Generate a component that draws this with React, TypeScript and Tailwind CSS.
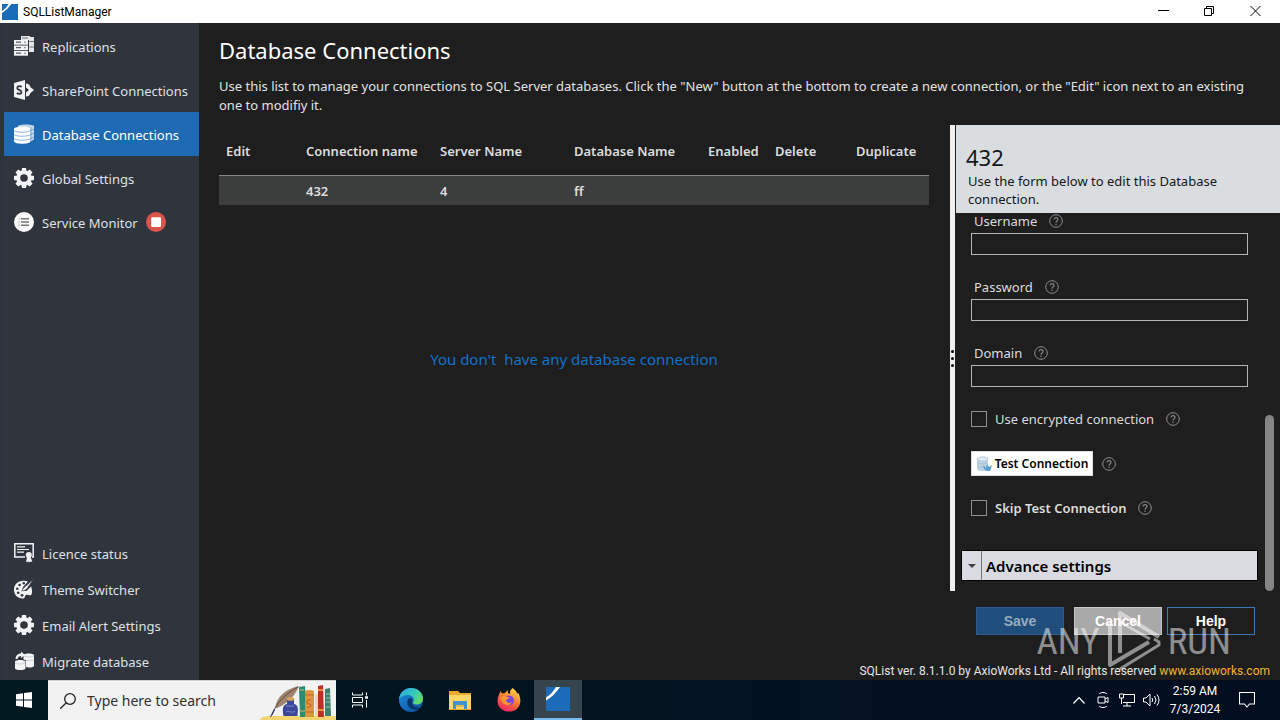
import React from "react";

const ink = "#f1f3f5";

function AppLogo({ className }: { className: string }) {
  return (
    <svg className={className} viewBox="0 0 24 24" aria-hidden="true">
      <rect width="24" height="24" fill="#1b6bb8" />
      <path d="M0 13.500V10.500Q6 7 10 0H14Q8 9 0 13.500Z" fill="#fff" />
    </svg>
  );
}

function ReplicationIcon() {
  return (
    <svg className="size-5 shrink-0" viewBox="0 0 20 20" aria-hidden="true">
      <path d="M7 0h9v1h4v15h-5V4H7Z" fill="#e4e6e8" />
      <path d="M8 2h6M15.500 5.500h4.500M15.500 11h4.500" stroke="#6a6f78" />
      <g fill={ink}>
        <rect x="0" y="4" width="14" height="4.700" />
        <rect x="0" y="9.500" width="14" height="4.700" />
        <rect x="0" y="15" width="14" height="4.700" />
      </g>
      <path d="M2 6.200h5M2 11.700h5M2 17.200h5" stroke="#555a63" strokeWidth="1.200" />
      <path d="M10 6.200h2M10 11.700h2M10 17.200h2" stroke="#8d9198" strokeWidth="1.200" />
    </svg>
  );
}

function SharePointIcon() {
  return (
    <svg className="size-5 shrink-0" viewBox="0 0 20 20" aria-hidden="true">
      <path d="M0 3 11 0V20L0 17Z" fill={ink} />
      <path d="M7.800 6.800C5 5.300 3 6.500 3.300 8.300 3.600 10 7.500 10 7.500 12.200 7.400 14 4.800 14.300 2.800 13" fill="none" stroke="#30343d" strokeWidth="1.800" />
      <path d="M12 3.500c2.500 0 4 1.500 4.300 3.500L20 10l-3.700 3.200c-.4 2-2 3.300-4.300 3.300v-4l3-2.500-3-2.500Z" fill={ink} />
    </svg>
  );
}

function DatabaseIcon() {
  return (
    <svg className="size-5 shrink-0" viewBox="0 0 20 20" aria-hidden="true">
      <path d="M4 2C6 0 18 0 20 2V15c-1 2-5 2.500-8 2.500L5 14Z" fill="#c3d8ed" />
      <path d="M0 4.500C1 2 15.500 2 16.500 4.500V17.500c-1 3-15.500 3-16.500 0Z" fill="#fff" />
      <path d="M0 6.500c2 2.300 14 2.300 16.500 0M0 10.500c2 2.300 14 2.300 16.500 0M0 14.500c2 2.300 14 2.300 16.500 0" fill="none" stroke="#8db5dd" strokeWidth="1" />
      <path d="M16.800 3.500v13M17 6.500l3-1.500M17 10.500l3-1.500M17 14.500l3-1.500" fill="none" stroke="#5a95cf" strokeWidth=".8" />
    </svg>
  );
}

function GearIcon() {
  return (
    <svg className="size-5 shrink-0" viewBox="0 0 20 20" aria-hidden="true">
      <g fill={ink}>
        {[0, 45, 90, 135, 180, 225, 270, 315].map((a) => (
          <path key={a} d="M7.300 4 8 0h4l.7 4Z" transform={`rotate(${a} 10 10)`} />
        ))}
      </g>
      <circle cx="10" cy="10" r="5.700" fill="none" stroke={ink} strokeWidth="3.800" />
    </svg>
  );
}

function MonitorIcon() {
  return (
    <svg className="size-5 shrink-0" viewBox="0 0 20 20" aria-hidden="true">
      <circle cx="10" cy="10" r="10" fill="#fafafa" />
      <path d="M7 6.800h8M7 10h8M7 13.200h8" stroke="#777" strokeWidth="1.600" />
      <path d="M4.500 6.800H6M4.500 10H6M4.500 13.200H6" stroke="#bbb" strokeWidth="1.600" />
    </svg>
  );
}

function StopIcon() {
  return (
    <svg className="size-5 shrink-0" viewBox="0 0 20 20" role="img" aria-label="Stopped">
      <circle cx="10" cy="10" r="10" fill="#d9544b" />
      <rect x="5.200" y="5.200" width="9.800" height="9.800" rx="1" fill="#fff" />
    </svg>
  );
}

function LicenceIcon() {
  return (
    <svg className="size-5 shrink-0" viewBox="0 0 20 20" aria-hidden="true">
      <path d="M11 14H.8V.8H19.200V14H18" fill="none" stroke={ink} strokeWidth="1.500" />
      <path d="M3 3.800h8M3 6.500h12M3 9.200h7" stroke={ink} strokeWidth="1.200" />
      <circle cx="14.800" cy="12" r="3" fill={ink} />
      <path d="M13 14h3.600l1.800 5-1.800-.5-1.500 1-.8-1-2.300.8Z" fill={ink} />
    </svg>
  );
}

function PaletteIcon() {
  return (
    <svg className="size-5 shrink-0" viewBox="0 0 20 20" aria-hidden="true">
      <path d="M14 2.500C8 0 0 3 0 10.500 0 16 4 20 9.500 19.500c2-.4 1-3 2.500-3.500 2-.8 4 1.500 5.500-.5C18.500 13 18 9.500 17 7.500L12.500 12 8 12 9 8Z" fill={ink} />
      <path d="M19.500.3 13 9.500c-1.500 2-3.500 2.500-5.500 2.300C9 11 8.800 9 10.800 8Z" fill={ink} stroke="#30343d" strokeWidth=".5" />
      <g fill="#30343d">
        <circle cx="9.800" cy="4.300" r="1.200" />
        <circle cx="5.600" cy="6" r="1.300" />
        <circle cx="3.300" cy="9.700" r="1.300" />
        <circle cx="4.200" cy="13.800" r="1.300" />
        <circle cx="8" cy="16.300" r="1.400" />
      </g>
    </svg>
  );
}

function MigrateIcon() {
  return (
    <svg className="size-5 shrink-0" viewBox="0 0 20 20" aria-hidden="true">
      <path d="M1.500 8C2 4 4 2.500 7 2.500V.5L11 4 7 7V5C5 5 4 6 3.500 8Z" fill={ink} />
      <path d="M1 10.500c1-2 9-2 10.500 0v7c-1 2-9.500 2-10.500 0Z" fill={ink} />
      <path d="M9.500 4c1-2 9.500-2 10.500 0v11c-1 1.800-6 1.800-8 1V9.500l-2.500-1Z" fill={ink} />
      <path d="M10 5c2 1.300 8 1.300 10 0M12 9.200c2 .8 6 .6 8-.5M1 12c2 1.300 8 1.300 10 0" fill="none" stroke="#bfc2c6" strokeWidth=".7" />
    </svg>
  );
}

function HelpIcon({ label }: { label: string }) {
  return (
    <svg className="size-[14px] shrink-0" viewBox="0 0 14 14" fill="none" stroke="#8c8e90" role="img" aria-label={label}>
      <circle cx="7" cy="7" r="6.300" />
      <path d="M5 5.500C5 3 9 3 9 5.400 9 7 7 6.900 7 8.700" strokeWidth="1.100" />
      <path d="M7 9.800v1.200" strokeWidth="1.200" />
    </svg>
  );
}

const topNav = [
  { label: "Replications", Icon: ReplicationIcon },
  { label: "SharePoint Connections", Icon: SharePointIcon },
  { label: "Database Connections", Icon: DatabaseIcon, active: true },
  { label: "Global Settings", Icon: GearIcon },
  { label: "Service Monitor", Icon: MonitorIcon, stopped: true },
];

const bottomNav = [
  { label: "Licence status", Icon: LicenceIcon },
  { label: "Theme Switcher", Icon: PaletteIcon },
  { label: "Email Alert Settings", Icon: GearIcon },
  { label: "Migrate database", Icon: MigrateIcon },
];

function TitleBar() {
  return (
    <header className="flex h-[23px] shrink-0 items-center bg-white px-0.5 text-black">
      <AppLogo className="size-4" />
      <span className="ml-[5px] flex-1 font-[Roboto,sans-serif] text-[12px]">SQLListManager</span>
      <button aria-label="Minimize" className="flex h-full w-[46px] items-center justify-center">
        <svg className="size-[11px]" viewBox="0 0 11 11"><path d="M0 4.500h11" stroke="#000" /></svg>
      </button>
      <button aria-label="Restore" className="flex h-full w-[46px] items-center justify-center">
        <svg className="size-[11px]" viewBox="0 0 11 11" fill="none" stroke="#000"><path d="M.5 2.500h7v7h-7ZM2.500 2.500v-2h7v7h-2" /></svg>
      </button>
      <button aria-label="Close" className="flex h-full w-[46px] items-center justify-center">
        <svg className="size-[11px]" viewBox="0 0 11 11" stroke="#000"><path d="M.5 0l10 10M10.500 0l-10 10" /></svg>
      </button>
    </header>
  );
}

function Sidebar() {
  return (
    <nav className="flex w-[199px] shrink-0 flex-col justify-between border-l-4 border-[#2c333c] bg-[#30343d] pt-px text-[#dfe1e4]">
      <ul>
        {topNav.map(({ label, Icon, active, stopped }) => (
          <li key={label}>
            <a href="#" className={`flex h-11 items-center gap-2 whitespace-nowrap pl-[10px] ${active ? "bg-[#1e6bb4] text-white" : ""}`}>
              <Icon />
              <span className="pt-0.5">{label}</span>
              {stopped && <StopIcon />}
            </a>
          </li>
        ))}
      </ul>
      <ul>
        {bottomNav.map(({ label, Icon }) => (
          <li key={label}>
            <a href="#" className="flex h-9 items-center gap-2 whitespace-nowrap pb-0.5 pl-[10px]">
              <Icon />
              <span className="pt-0.5">{label}</span>
            </a>
          </li>
        ))}
      </ul>
    </nav>
  );
}

function ConnectionTable() {
  return (
    <section className="min-w-0 flex-1 pr-[21px]">
      <table className="w-full table-fixed border-collapse text-left text-[13px] font-semibold text-[#dcdcdc]">
        <colgroup>
          <col className="w-[80px]" />
          <col className="w-[134px]" />
          <col className="w-[134px]" />
          <col className="w-[134px]" />
          <col className="w-[67px]" />
          <col className="w-[81px]" />
          <col />
        </colgroup>
        <thead>
          <tr className="h-[50px] whitespace-nowrap">
            {["Edit", "Connection name", "Server Name", "Database Name", "Enabled", "Delete", "Duplicate"].map((h) => (
              <th key={h} className="pl-[7px] pt-0.5 font-semibold">{h}</th>
            ))}
          </tr>
        </thead>
        <tbody>
          <tr className="h-[30px] border-t border-[#858786] bg-[#3c3e3e]">
            <td />
            <td className="pl-[7px] pt-0.5">432</td>
            <td className="pl-[7px] pt-0.5">4</td>
            <td className="pl-[7px] pt-0.5">ff</td>
            <td />
            <td />
            <td />
          </tr>
        </tbody>
      </table>
      <p className="mt-[142px] whitespace-pre text-center text-[15px] leading-6 text-[#1371c8]">
        {"You don't  have any database connection"}
      </p>
    </section>
  );
}

function Field({ id, label, type }: { id: string; label: string; type: string }) {
  return (
    <div>
      <div className="mb-1 flex h-4 items-center gap-3 pl-[3px]">
        <label htmlFor={id}>{label}</label>
        <HelpIcon label={`${label} help`} />
      </div>
      <input id={id} type={type} className="block h-[22px] w-full border border-[#b4b4b4] bg-transparent px-1" />
    </div>
  );
}

function CheckField({ id, label, bold }: { id: string; label: string; bold?: boolean }) {
  return (
    <div className="flex h-4 items-center">
      <input id={id} type="checkbox" className="size-4 appearance-none border border-[#909090]" />
      <label htmlFor={id} className={`ml-2 mr-3 ${bold ? "font-semibold" : ""}`}>{label}</label>
      <HelpIcon label={`${label} help`} />
    </div>
  );
}

function EditPanel() {
  return (
    <aside className="w-[324px] shrink-0">
      <div className="h-[88px] bg-[#dadde0] pl-[10px] pt-5 text-[#14171b]">
        <h2 className="text-[22px] leading-6">432</h2>
        <p className="pl-0.5 pt-[3px] leading-[18px]">
          Use the form below to edit this Database<br />connection.
        </p>
      </div>
      <div className="flex h-[378px] items-end justify-between">
        <div className="h-full w-[302px] pl-[5px]">
          <form className="flex flex-col gap-6 pl-[10px] pr-[10px] text-[#dcdcdc]">
            <Field id="username" label="Username" type="text" />
            <Field id="password" label="Password" type="password" />
            <Field id="domain" label="Domain" type="text" />
            <CheckField id="encrypted" label="Use encrypted connection" />
            <div className="flex items-center gap-[9px]">
              <button type="button" className="flex h-[25px] w-[122px] items-center justify-center gap-[3px] whitespace-nowrap border border-[#ddd] bg-white text-[12px] font-semibold text-black">
                <svg className="size-4 shrink-0" viewBox="0 0 16 16" aria-hidden="true">
                  <path d="M1 3c0-3 11-3 11 0v10c0 3-11 3-11 0Z" fill="#bfd3e3" />
                  <ellipse cx="6.500" cy="3" rx="5.500" ry="2" fill="#e4edf4" stroke="#a7bacb" strokeWidth=".6" />
                  <path d="M1 6.500c2 2 9 2 11 0M1 9.800c2 2 9 2 11 0" fill="none" stroke="#a0b8cc" strokeWidth=".7" />
                  <path d="m7 9 1 4 3 2h3l2-6-3 2-2-3-1 4Z" fill="#5a9fd4" />
                </svg>
                Test Connection
              </button>
              <HelpIcon label="Test Connection help" />
            </div>
            <CheckField id="skip" label="Skip Test Connection" bold />
          </form>
          <button className="mt-[34px] flex h-[31px] w-full items-stretch border border-black bg-[#dadbe0] text-left text-[15px] font-semibold text-black">
            <span className="flex w-5 items-center justify-center border-r border-[#777]">
              <svg className="h-1 w-2" viewBox="0 0 8 4" aria-hidden="true"><path d="M0 0h8L4 4Z" fill="#444" /></svg>
            </span>
            <span className="self-center pl-1">Advance settings</span>
          </button>
        </div>
        <div className="mr-[6px] h-44 w-[9px] rounded-full bg-[#858585]" />
      </div>
    </aside>
  );
}

function Watermark() {
  return (
    <div className="pointer-events-none absolute bottom-[8px] right-[49px] flex items-center gap-[7px] whitespace-nowrap font-['Roboto_Condensed','Open_Sans_Condensed',Roboto,sans-serif] text-[37px] font-normal leading-none text-white/50">
      <span>ANY</span>
      <svg className="h-[62px] w-[54px]" viewBox="0 0 54 62" fill="none" stroke="#fff" strokeOpacity=".5" strokeWidth="4" strokeLinejoin="round" aria-hidden="true">
        <path d="M13 43V3L52 27" />
        <path d="M3 12V55L42 32" />
        <path d="M13 12 43 29M13 59 52 35V32L47 29" strokeWidth="3" />
      </svg>
      <span>RUN</span>
    </div>
  );
}

function SearchArt() {
  return (
    <svg className="h-10 w-[77px] shrink-0" viewBox="0 0 77 40" aria-hidden="true">
      <path d="M0 40c2-4 5-5 12-5h65v5Z" fill="#f3d470" />
      <path d="M16 27C18 15 27 8 40 5 37 13 30 22 18 27" fill="#a08470" />
      <path d="M13 34C17 22 26 13 39 6" fill="none" stroke="#5d4a42" strokeWidth="1" />
      <path d="m11 36 4-8 1 1-4 7Z" fill="#2d3160" />
      <path d="M28 18h7v5c5 1 4 6 3.500 12H24.500c-1-6-1.500-11 3.500-12Z" fill="#3d4797" />
      <ellipse cx="31.500" cy="18" rx="4" ry="1.800" fill="#d7a35b" />
      <path d="M27 25h8M27 31c3-2 6 2 9-1" stroke="#7b88cf" fill="none" />
      <path d="m40 6 6-1 1 31h-6Z" fill="#2b8a6f" />
      <path d="M41 9h4M41 30h5" stroke="#d9b55f" />
      <path d="M46 10q5-2 9 0v26h-9Z" fill="#dc9640" />
      <path d="M46 14h9M46 31h9" stroke="#b56a2c" strokeWidth="1.200" />
      <path d="M52 19c-5-1-5 4-2 4s3 4-2 3" fill="none" stroke="#b8702e" strokeWidth="1.200" />
      <path d="M56 13h3v22h-3Z" fill="#ecdcb0" />
      <path d="m59 5 5-1 1 32h-6Z" fill="#bd3029" />
      <path d="M59 9h5M59 29h6" stroke="#efb04b" strokeWidth="1.500" />
      <path d="m66 8 5-1 1 28h-6Z" fill="#3d7f6a" />
      <path d="M67 13h4M67 17h4M67 21h4M67 26h4" stroke="#a8c9a6" />
    </svg>
  );
}

function Taskbar() {
  return (
    <footer className="flex h-10 shrink-0 items-stretch bg-linear-to-r from-[#021820] to-[#030d20] text-white">
      <button aria-label="Start" className="flex w-12 items-center justify-center">
        <svg className="size-4" viewBox="0 0 16 16" fill="#fff"><path d="M0 2.200 7 1.200V7.500H0ZM8 1 16 0V7.500H8ZM0 8.500H7v6.300l-7-1ZM8 8.500h8V16L8 15Z" /></svg>
      </button>
      <div className="flex w-[288px] items-center border-t border-[#d0d0d0] bg-[#f2f2f2]">
        <svg className="ml-3 size-4 shrink-0" viewBox="0 0 16 16" fill="none" stroke="#222" strokeWidth="1.300" aria-hidden="true">
          <circle cx="10" cy="6" r="5.300" /><path d="m6.200 9.800-6 6" />
        </svg>
        <input aria-label="Search" placeholder="Type here to search" className="ml-[11px] min-w-0 flex-1 bg-transparent text-[14px] placeholder:text-[#303030]" />
        <SearchArt />
      </div>
      <button aria-label="Task view" className="mr-[3px] flex w-12 items-center justify-center">
        <svg className="size-4" viewBox="0 0 16 16" fill="none" stroke="#fff" strokeWidth="1">
          <path d="M.5.500v2.500h10V.5M.5 5.500h10v5H.500ZM.5 15.500V13h10v2.500M14.500.5v3M14.500 8v7.500" /><path d="M13 5.500h3" strokeWidth="2.500" />
        </svg>
      </button>
      <div className="flex gap-px">
        <button aria-label="Edge" className="flex w-12 items-center justify-center">
          <svg className="size-6" viewBox="0 0 24 24">
            <defs>
              <linearGradient id="edgeTop" x1="0" y1="0" x2="1" y2=".6"><stop offset="0" stopColor="#2aa5e0" /><stop offset=".6" stopColor="#36c9bd" /><stop offset="1" stopColor="#64dc62" /></linearGradient>
              <linearGradient id="edgeLow" x1="0" y1="0" x2="1" y2="1"><stop offset="0" stopColor="#1f90de" /><stop offset="1" stopColor="#0b4a9b" /></linearGradient>
            </defs>
            <circle cx="12" cy="12" r="12" fill="url(#edgeLow)" />
            <path d="M0 11C1 4 6 0 12 0c7 0 12 5 12 10.500 0 4-3 6-6.300 6-3 0-4-1.300-3.700-2.200 2.500-3-.5-7.300-5-7.300-4 0-7.500 2-9 4Z" fill="url(#edgeTop)" />
            <path d="M9.500 11c-3 4 0 10.500 7 10.500 2.500 0 4.500-1 6-2.500-4 1.500-9 0-9.500-4.200-.2-1.500.7-1.600.3-3C12.500 10 10.500 10 9.500 11Z" fill="#073567" />
          </svg>
        </button>
        <button aria-label="File Explorer" className="flex w-12 items-center justify-center">
          <svg className="h-[19px] w-[22px]" viewBox="0 0 22 19">
            <path d="M0 0h9l2 2h11v17H0Z" fill="#e9a72c" /><path d="M0 4h22v14H0Z" fill="#fcd768" />
            <path d="M4 10h14v8h-3v-4H7v4H4Z" fill="#3f93ce" /><path d="M7 14h8v2H7Z" fill="#e7ba48" />
          </svg>
        </button>
        <button aria-label="Firefox" className="flex w-12 items-center justify-center">
          <svg className="size-6" viewBox="0 0 24 24">
            <defs><linearGradient id="fox" x1=".8" y1="0" x2=".3" y2="1"><stop offset="0" stopColor="#ffe14a" /><stop offset=".5" stopColor="#ff7a30" /><stop offset="1" stopColor="#ec2264" /></linearGradient></defs>
            <path d="M1.500 8 3.500 3 5 5.500 8 5 10.500 2l.5 3 2 1V3L15.500 0c3 2 4 4 5 6l.5-1.500C26.500 14 22 23.500 12 23.500 3 23.500-1.500 16 1.500 8Z" fill="url(#fox)" />
            <circle cx="12" cy="12.500" r="5" fill="#7d45dc" />
            <path d="M3.500 10C6 7 9 7.500 12.500 10l-3.500 2c0 3 4 4 6 2-2 5-10 4-11.500-4Z" fill="#ff9432" />
          </svg>
        </button>
        <button aria-label="SQLListManager" className="flex w-12 items-center justify-center border-b-2 border-[#76b9ed] bg-[#36454d]">
          <AppLogo className="size-6" />
        </button>
      </div>
      <div className="ml-auto flex items-center">
        <svg className="h-[7px] w-3" viewBox="0 0 12 7" fill="none" stroke="#fff" strokeWidth="1.200" aria-hidden="true"><path d="m.5 6.500 5.500-6 5.500 6" /></svg>
        <svg className="ml-3 h-4 w-3" viewBox="0 0 12 16" fill="none" stroke="#fff" aria-hidden="true"><path d="M1 5h7v6H1ZM8 7l3-1.500v5L8 9M2 2c2-2 6-2 8 0M2 14c2 2 6 2 8 0" /></svg>
        <svg className="ml-[10px] h-[14px] w-4" viewBox="0 0 16 14" fill="none" stroke="#fff" aria-hidden="true"><path d="M5 1.500h10.500v8H4M4 13h8M8 9.500V13M.5 1h4v4h-4ZM2.500 5v6" /></svg>
        <svg className="ml-2 h-[14px] w-[17px]" viewBox="0 0 17 14" fill="none" stroke="#fff" aria-hidden="true"><path d="M.5 5h2.500l4-4v12L3 9H.5ZM9 5q1.500 2 0 4M11.500 3q3 4 0 8M14 1.500q4 5.500 0 11" /></svg>
        <time className="w-[70px] text-center font-[Roboto,sans-serif] text-[12px] leading-[18px]">2:59 AM<br />7/3/2024</time>
        <button aria-label="Notifications" className="ml-[9px] mr-[25px]">
          <svg className="block size-4" viewBox="0 0 16 16" fill="none" stroke="#fff" strokeWidth="1.100"><path d="M.5.500h15v11.500H10.500l-2.500 3-2.500-3H.500Z" /></svg>
        </button>
      </div>
    </footer>
  );
}

export default function App() {
  return (
    <div className="flex min-h-screen flex-col bg-[#1e1e1e] font-['Noto_Sans','Open_Sans',sans-serif] text-[13px] leading-[18px]">
      <TitleBar />
      <div className="flex flex-1">
        <Sidebar />
        <main className="relative flex min-w-0 flex-1 flex-col">
          <div className="h-[102px] pl-5 pr-4 pt-[11px] text-[#e2e2e2]">
            <h1 className="text-[22px] leading-8 text-white">Database Connections</h1>
            <p className="pt-[11px] leading-[19px]">
              Use this list to manage your connections to SQL Server databases. Click the "New" button at the bottom to create a new connection, or the "Edit" icon next to an existing one to modifiy it.
            </p>
          </div>
          <div className="flex min-h-[466px] flex-1 pl-5">
            <ConnectionTable />
            <div className="mr-px flex w-[5px] shrink-0 flex-col items-center justify-center gap-1 bg-[#f0f0f0]">
              <span className="size-[3px] rounded-full bg-black" />
              <span className="size-[3px] rounded-full bg-black" />
              <span className="size-[3px] rounded-full bg-black" />
            </div>
            <EditPanel />
          </div>
          <div className="flex justify-end pr-[25px] pt-4 font-['Liberation_Sans',sans-serif] text-[14px] font-bold">
            <button className="h-7 w-[88px] border border-[#2a5c8f] bg-[#1f4e7d] text-[#9aaabb]">Save</button>
            <button className="ml-[10px] h-7 w-[88px] border border-[#c4c4c4] bg-[#a9a9a9] text-white">Cancel</button>
            <button className="ml-[5px] h-7 w-[88px] border border-[#3d78b4] text-white">Help</button>
          </div>
          <p className="mt-[27px] pr-[10px] text-right font-[Roboto,sans-serif] text-[12px] text-[#e6e6e6]">
            SQList ver. 8.1.1.0 by AxioWorks Ltd - All rights reserved <a href="#" className="text-[#f0b429]">www.axioworks.com</a>
          </p>
          <Watermark />
        </main>
      </div>
      <Taskbar />
    </div>
  );
}
